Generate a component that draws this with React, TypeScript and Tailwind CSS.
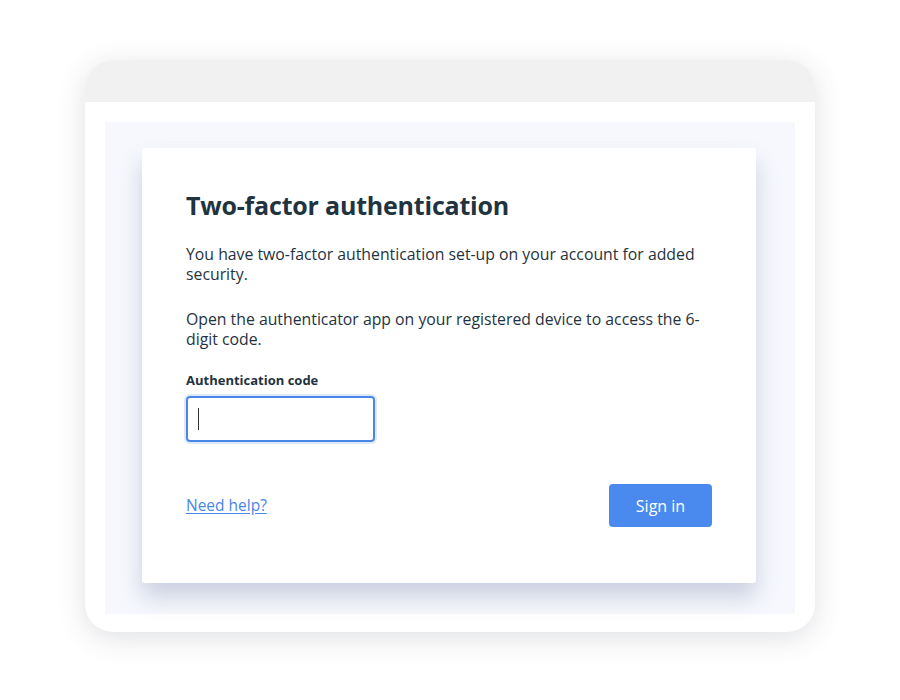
export default function App() {
  return (
    <div className="w-[900px] h-[700px] bg-white flex items-start justify-center pt-[60px] font-['Open_Sans',sans-serif]">
      <div className="w-[730px] h-[572px] rounded-[28px] bg-white shadow-[0_6px_28px_rgba(60,70,90,0.16)] overflow-hidden flex flex-col">
        <div className="h-[42px] bg-[#f1f1f1] shrink-0" />
        <div className="flex-1 px-[20px] pt-[20px] pb-[18px]">
          <div className="h-full bg-[#f6f8fd] pl-[37px] pr-[39px] pt-[26px]">
            <div className="h-[435px] bg-white rounded-[3px] shadow-[0_14px_22px_rgba(150,160,190,0.45)] pl-[44px] pr-[44px] pt-[40px] text-[#1f3340]">
              <h1 className="text-[25px] font-bold leading-[34px] tracking-[-0.2px]">Two-factor authentication</h1>
              <p className="mt-[22px] text-[15.8px] leading-[20px] w-[530px]">
                You have two-factor authentication set-up on your account for added security.
              </p>
              <p className="mt-[25px] text-[15.8px] leading-[20px] w-[530px]">
                Open the authenticator app on your registered device to access the 6-digit code.
              </p>
              <label className="block mt-[22px] text-[13px] font-bold leading-[18px]">Authentication code</label>
              <div className="mt-[7px] w-[189px] h-[46px] rounded-[4px] border-2 border-[#4a86e8] shadow-[0_0_0_2px_rgba(74,134,232,0.18)] flex items-center pl-[10px]">
                <span className="w-px h-[22px] bg-[#333]" />
              </div>
              <div className="mt-[42px] flex items-center justify-between">
                <a href="#" className="text-[15.5px] text-[#4a86e8] underline underline-offset-2">Need help?</a>
                <button className="w-[103px] h-[43px] rounded-[4px] bg-[#4a89ee] text-white text-[16px]">Sign in</button>
              </div>
            </div>
          </div>
        </div>
      </div>
    </div>
  );
}
